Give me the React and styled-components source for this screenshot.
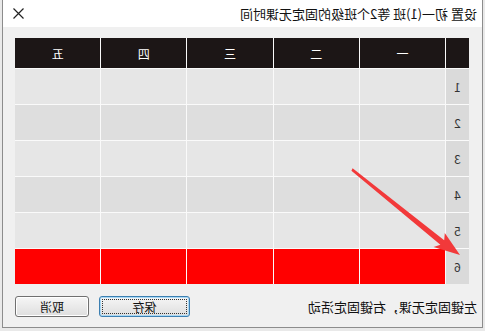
import React from "react";
import styled, { createGlobalStyle } from "styled-components";

const GlobalStyle = createGlobalStyle`
  html, body {
    margin: 0;
    padding: 0;
    background: #e9e9e9;
    font-family: "Noto Sans CJK SC", "Noto Sans", sans-serif;
  }
`;

// the reference is a mirrored screenshot, so the whole page is flipped
const Page = styled.div`
  position: relative;
  width: 485px;
  height: 331px;
  transform: scaleX(-1);
  overflow: hidden;
`;

const Window = styled.div`
  position: relative;
  margin-left: 2px;
  width: 479px;
  height: 327px;
  border: 1px solid #8c8c8c;
  border-top: none;
  background: #f0f0f0;
  display: flex;
  flex-direction: column;
`;

const TitleBar = styled.div`
  height: 27px;
  background: #fff;
  display: flex;
  align-items: center;
  justify-content: space-between;
  padding: 0 10px 0 5px;
  font-size: 13px;
  color: #111;
`;

const Body = styled.div`
  padding: 11px 12px 0 13px;
  display: flex;
  flex-direction: column;
`;

const Grid = styled.div`
  display: grid;
  width: 454px;
  grid-template-columns: 23px repeat(5, 1fr);
  grid-template-rows: 30px repeat(6, 35px);
  gap: 1px;
  background: #fafafa;
`;

const HeadCell = styled.div`
  background: #1c1616;
  color: #fff;
  font-size: 12px;
  display: flex;
  align-items: center;
  justify-content: center;
`;

const NumCell = styled.div`
  background: #dadada;
  color: #333;
  font-size: 12px;
  display: flex;
  align-items: center;
  justify-content: center;
`;

const Cell = styled.div`
  background: ${(p) => (p.$busy ? "#ff0000" : p.$odd ? "#e6e6e6" : "#dedede")};
`;

const Footer = styled.div`
  margin-top: 12px;
  display: flex;
  align-items: center;
  justify-content: space-between;
  width: 454px;
`;

const Hint = styled.span`
  font-size: 13px;
  color: #111;
  margin-left: -8px;
`;

const Buttons = styled.div`
  display: flex;
  gap: 10px;
`;

const Button = styled.button`
  position: relative;
  width: ${(p) => p.$w}px;
  height: 21px;
  border: 1px solid ${(p) => (p.$focus ? "#3c7fb1" : "#707070")};
  border-radius: 3px;
  background: linear-gradient(#f6f6f6, #dedede);
  font-family: "Noto Sans CJK SC", sans-serif;
  font-size: 12px;
  color: #111;
  padding: 0;
  box-shadow: ${(p) => (p.$focus ? "inset 0 0 0 1px #a8d8f5" : "inset 0 0 0 1px #fff")};
  &::after {
    content: "";
    display: ${(p) => (p.$focus ? "block" : "none")};
    position: absolute;
    inset: 2px;
    border: 1px dotted #333;
  }
`;

const Arrow = styled.svg`
  position: absolute;
  left: 0;
  top: 0;
  pointer-events: none;
`;

const heads = ["一", "二", "三", "四", "五"];

export default function App() {
  const rows = [1, 2, 3, 4, 5, 6];
  return (
    <>
      <GlobalStyle />
      <Page>
        <Window>
          <TitleBar>
            <span>设置 初一(1)班 等2个班级的固定无课时间</span>
            <svg width="11" height="11" viewBox="0 0 11 11">
              <path d="M0.5 0.5 L10.5 10.5 M10.5 0.5 L0.5 10.5" stroke="#222" strokeWidth="1.2" />
            </svg>
          </TitleBar>
          <Body>
            <Grid>
              <HeadCell />
              {heads.map((h) => (
                <HeadCell key={h}>{h}</HeadCell>
              ))}
              {rows.map((r) => (
                <React.Fragment key={r}>
                  <NumCell>{r}</NumCell>
                  {heads.map((h) => (
                    <Cell key={h} $odd={r % 2 === 1} $busy={r === 6} />
                  ))}
                </React.Fragment>
              ))}
            </Grid>
            <Footer>
              <Hint>左键固定无课，右键固定活动</Hint>
              <Buttons>
                <Button $w={91} $focus>保存</Button>
                <Button $w={74}>取消</Button>
              </Buttons>
            </Footer>
          </Body>
          <Arrow width="485" height="331" viewBox="0 0 485 331">
            <polygon
              points="130.6,170.8 41.6,244.8 48.4,247 22,255 37.2,233 37.8,240.2 129.4,168.2"
              fill="#f2393a"
            />
          </Arrow>
        </Window>
      </Page>
    </>
  );
}
